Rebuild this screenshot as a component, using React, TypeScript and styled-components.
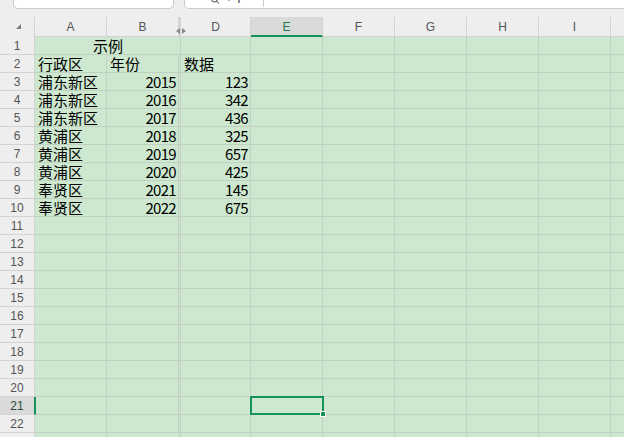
import React from 'react'
import styled, { createGlobalStyle } from 'styled-components'

const GlobalStyle = createGlobalStyle`
  html, body {
    margin: 0;
    padding: 0;
    overflow: hidden;
    background: #eeeeee;
  }
`

const GREEN = '#17915c'
const CELL_BG = '#cde8cf'
const GRID = '#c2d0c3'
const HEAD_BG = '#eeeeee'
const HEAD_LINE = '#d3d3d3'

type Col = { key: string; width: number; hidden?: boolean }

const columns: Col[] = [
  { key: 'A', width: 72 },
  { key: 'B', width: 72 },
  { key: 'C', width: 2, hidden: true },
  { key: 'D', width: 70 },
  { key: 'E', width: 72 },
  { key: 'F', width: 72 },
  { key: 'G', width: 72 },
  { key: 'H', width: 72 },
  { key: 'I', width: 72 },
  { key: 'J', width: 72 },
]

const data: [string, string, string][] = [
  ['行政区', '年份', '数据'],
  ['浦东新区', '2015', '123'],
  ['浦东新区', '2016', '342'],
  ['浦东新区', '2017', '436'],
  ['黄浦区', '2018', '325'],
  ['黄浦区', '2019', '657'],
  ['黄浦区', '2020', '425'],
  ['奉贤区', '2021', '145'],
  ['奉贤区', '2022', '675'],
]

const ROWS = 23
const SEL_ROW = 21
const SEL_COL = 'E'

const template = `35px ${columns.map(c => c.width + 'px').join(' ')}`

const Page = styled.div`
  width: 624px;
  height: 437px;
  overflow: hidden;
  background: ${HEAD_BG};
`

const TopBar = styled.div`
  height: 17px;
  display: flex;
  align-items: flex-start;
  gap: 10px;
  padding-left: 13px;
`

const Field = styled.div<{ $w?: number }>`
  height: 9px;
  box-sizing: border-box;
  width: ${p => (p.$w ? p.$w + 'px' : 'auto')};
  flex: ${p => (p.$w ? 'none' : '1')};
  background: #fff;
  border: 1px solid #c9c9c9;
  border-top: 0;
  border-radius: 0 0 5px 5px;
  margin-right: ${p => (p.$w ? '0' : '-10px')};
  overflow: hidden;
  display: flex;
  align-items: flex-end;
  font-family: 'Liberation Sans', Arial, sans-serif;
  font-size: 12px;
  color: #333;
`

const NameText = styled.span`
  line-height: 12px;
  margin: 0 0 6px 60px;
`

const FxTools = styled.div`
  display: flex;
  align-items: flex-end;
  gap: 6px;
  margin: 0 0 1px 26px;
  height: 9px;
`

const FxText = styled.span`
  font-family: 'Liberation Serif', serif;
  font-style: italic;
  font-size: 13px;
  line-height: 13px;
  margin-bottom: 5px;
`

const Divider = styled.span`
  width: 1px;
  height: 9px;
  background: #c9c9c9;
  margin-left: 10px;
`

const Sheet = styled.div`
  display: grid;
  grid-template-columns: ${template};
  grid-auto-rows: 18px;
  grid-template-rows: 20px;
  width: max-content;
`

const Corner = styled.div`
  background: ${HEAD_BG};
  border-right: 1px solid ${HEAD_LINE};
  position: relative;
  &::after {
    content: '';
    position: absolute;
    left: 16px;
    top: 7px;
    width: 0;
    height: 0;
    border-left: 5px solid transparent;
    border-bottom: 5px solid #7a7a7a;
  }
`

const ColHead = styled.div<{ $sel?: boolean; $hidden?: boolean }>`
  box-sizing: border-box;
  background: ${p => (p.$sel ? '#dadada' : HEAD_BG)};
  border-right: 1px solid ${HEAD_LINE};
  border-left: ${p => (p.$hidden ? `1px solid ${HEAD_LINE}` : '0')};
  border-bottom: ${p => (p.$sel ? `2px solid ${GREEN}` : `1px solid ${HEAD_LINE}`)};
  display: flex;
  align-items: center;
  justify-content: center;
  font-family: 'Liberation Sans', Arial, sans-serif;
  font-size: 12px;
  color: ${p => (p.$sel ? '#1d7a4f' : '#555')};
  position: relative;
  padding-top: ${p => (p.$sel ? '1px' : '0')};
`

const HiddenMark = styled.div`
  position: absolute;
  top: 11px;
  left: -4px;
  display: flex;
  gap: 2px;
  z-index: 2;
  span {
    width: 0;
    height: 0;
    border-top: 3px solid transparent;
    border-bottom: 3px solid transparent;
  }
  span:first-child {
    border-right: 4px solid #8a8a8a;
  }
  span:last-child {
    border-left: 4px solid #8a8a8a;
  }
`

const RowHead = styled.div<{ $sel?: boolean }>`
  box-sizing: border-box;
  background: ${p => (p.$sel ? '#dadada' : HEAD_BG)};
  border-bottom: 1px solid ${HEAD_LINE};
  border-right: ${p => (p.$sel ? `2px solid ${GREEN}` : `1px solid ${HEAD_LINE}`)};
  margin-right: ${p => (p.$sel ? '-1px' : '0')};
  position: relative;
  z-index: ${p => (p.$sel ? 1 : 0)};
  display: flex;
  align-items: center;
  justify-content: center;
  font-family: 'Liberation Sans', Arial, sans-serif;
  font-size: 12px;
  color: ${p => (p.$sel ? '#2c4a3b' : '#555')};
`

const Cell = styled.div<{ $num?: boolean; $span?: number }>`
  box-sizing: border-box;
  background: ${CELL_BG};
  border-right: 1px solid ${GRID};
  border-bottom: 1px solid ${GRID};
  grid-column: ${p => (p.$span ? `span ${p.$span}` : 'auto')};
  display: flex;
  align-items: center;
  justify-content: ${p => (p.$num ? 'flex-end' : p.$span ? 'center' : 'flex-start')};
  padding: 1px 2px 0 3px;
  font-family: 'Noto Sans CJK SC', 'Liberation Sans', sans-serif;
  font-size: 15px;
  line-height: 16px;
  font-weight: 400;
  letter-spacing: ${p => (p.$num ? '-0.7px' : '0')};
  color: #000;
  white-space: nowrap;
  position: relative;
`

const Selection = styled.div`
  position: absolute;
  left: -1px;
  top: -1px;
  right: -2px;
  bottom: -1px;
  border: 2px solid ${GREEN};
  pointer-events: none;
  z-index: 3;
  &::after {
    content: '';
    position: absolute;
    right: -4px;
    bottom: -4px;
    width: 4px;
    height: 4px;
    background: ${GREEN};
    border: 1px solid #fff;
  }
`

function SearchIcon() {
  return (
    <svg width="9" height="9" viewBox="0 0 9 9" style={{ marginBottom: 1 }}>
      <circle cx="3.5" cy="2" r="3" fill="none" stroke="#444" strokeWidth="1" />
      <line x1="5.6" y1="4.2" x2="8" y2="6.5" stroke="#444" strokeWidth="1" />
    </svg>
  )
}

function Chevron() {
  return (
    <svg width="6" height="9" viewBox="0 0 6 9" style={{ marginBottom: 1 }}>
      <path d="M0.5 1 L3 3.5 L5.5 1" fill="none" stroke="#444" strokeWidth="1" />
    </svg>
  )
}

const renderRow = (r: number) => {
  const sel = r === SEL_ROW
  const cells: React.ReactNode[] = []
  if (r === 1) {
    cells.push(
      <Cell key="A1" $span={3}>
        示例
      </Cell>
    )
    columns.slice(3).forEach(c =>
      cells.push(<Cell key={c.key + r}>{c.key === SEL_COL && sel ? <Selection /> : null}</Cell>)
    )
  } else {
    const row = data[r - 2]
    columns.forEach((c, i) => {
      let text = ''
      let num = false
      if (row) {
        if (c.key === 'A') text = row[0]
        if (c.key === 'B') {
          text = row[1]
          num = r > 2
        }
        if (c.key === 'D') {
          text = row[2]
          num = r > 2
        }
      }
      if (c.hidden) {
        cells.push(<Cell key={c.key + r} style={{ padding: 0 }} />)
        return
      }
      cells.push(
        <Cell key={c.key + r + i} $num={num}>
          {text}
          {c.key === SEL_COL && sel ? <Selection /> : null}
        </Cell>
      )
    })
  }
  return (
    <React.Fragment key={r}>
      <RowHead $sel={sel}>{r}</RowHead>
      {cells}
    </React.Fragment>
  )
}

const App = () => {
  return (
    <Page>
      <GlobalStyle />
      <TopBar>
        <Field $w={161}>
          <NameText>E21</NameText>
        </Field>
        <Field>
          <FxTools>
            <SearchIcon />
            <Chevron />
            <FxText>fx</FxText>
            <Divider />
          </FxTools>
        </Field>
      </TopBar>
      <Sheet>
        <Corner />
        {columns.map(c => (
          <ColHead key={c.key} $sel={c.key === SEL_COL} $hidden={c.hidden}>
            {c.hidden ? (
              <HiddenMark>
                <span />
                <span />
              </HiddenMark>
            ) : (
              c.key
            )}
          </ColHead>
        ))}
        {Array.from({ length: ROWS }, (_, i) => renderRow(i + 1))}
      </Sheet>
    </Page>
  )
}

export default App
